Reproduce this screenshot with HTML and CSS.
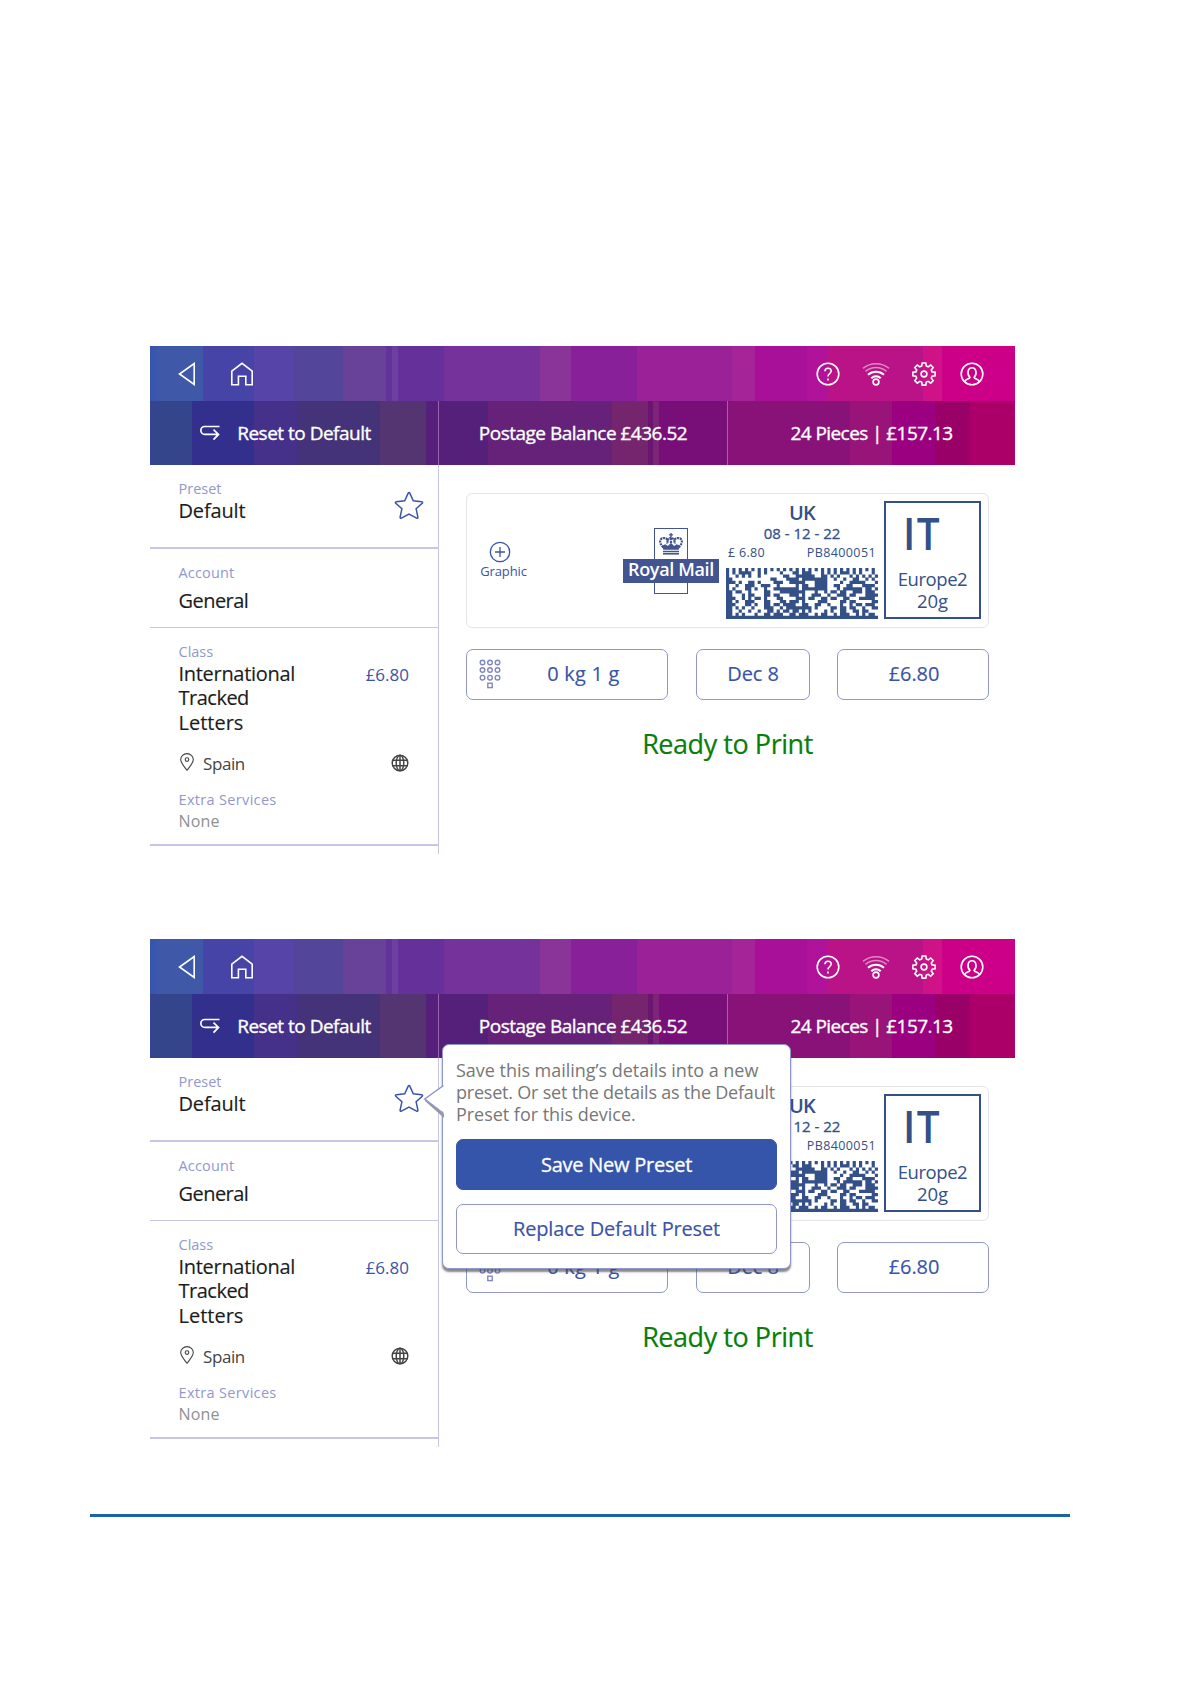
FILE: index.html
```
<!DOCTYPE html>
<html lang="en">
<head>
<meta charset="utf-8">
<title>Presets</title>
<link rel="stylesheet" href="styles.css">
</head>
<body>
<svg class="defs" width="0" height="0" aria-hidden="true">
  <symbol id="i-back" viewBox="0 0 18 24"><path d="M16.2 1.5v21L1.5 12z"/></symbol>
  <symbol id="i-home" viewBox="0 0 24 24"><path d="M1.8 9.2 12 1.3l10.2 7.9v13.5h-6.4v-8.4H8.4v8.4H1.8z"/></symbol>
  <symbol id="i-reset" viewBox="0 0 20 17"><path d="M19.5 1.5H4.8a3.9 3.9 0 0 0 0 7.9h13.6M13.5 4.6l5 4.8-5 5.2"/></symbol>
  <symbol id="i-help" viewBox="0 0 24 24"><circle cx="12" cy="12" r="10.8"/><path d="M9 9.3c0-4 6.200-3.900 6.200-.3 0 2.500-3.200 2.600-3.200 5.600M12 16.600v1.800"/></symbol>
  <symbol id="i-wifi" viewBox="0 0 28 24"><circle cx="14" cy="20" r="2.900"/><path stroke-width="2" d="M9.300 16.200a6.600 6.600 0 0 1 9.400 0M6 12.800a12 12 0 0 1 16 0"/><path opacity=".5" d="M3.500 9.300a16.500 16.500 0 0 1 21 0M1 6.300a21 21 0 0 1 26 0"/></symbol>
  <symbol id="i-gear" viewBox="0 0 24 24"><circle cx="12" cy="12" r="2.900"/><path d="M10.200 1h3.600l.5 3 1.900.8L18.700 3l2.500 2.500-1.900 2.500.8 1.900 3 .4v3.500l-3 .5-.8 1.900 1.900 2.400-2.500 2.500-2.500-1.800-1.900.8-.5 3h-3.600l-.5-3-1.900-.8-2.500 1.800-2.500-2.500 1.900-2.400-.8-1.900-3-.5v-3.500l3-.4.8-1.900-1.900-2.500L5.300 3l2.500 1.800 1.900-.8z"/></symbol>
  <symbol id="i-user" viewBox="0 0 24 24"><circle cx="12" cy="12" r="10.800"/><path d="M4.600 19.700c.8-2.900 4.600-2.300 5.300-4.300-3.200-3.300-2.300-9.600 2.100-9.600s5.300 6.300 2.100 9.600c.7 2 4.500 1.400 5.300 4.300"/></symbol>
  <symbol id="i-star" viewBox="0 0 30 30"><path d="M14.200 2.200q.8-1.400 1.600 0l3.500 7.600 8.400.9q1.500.3.500 1.500l-6.100 5.600 1.800 8.300q.1 1.600-1.300 1L15 23l-7.600 4.100q-1.400.6-1.300-1l1.800-8.300-6.100-5.600q-1-1.200.5-1.500l8.400-.9z"/></symbol>
  <symbol id="i-pin" viewBox="0 0 14 18"><path d="M7 17.300C3.500 12.500.7 9.900.7 6.500a6.300 5.900 0 0 1 12.600 0c0 3.400-2.800 6-6.300 10.800z"/><circle cx="7" cy="6.600" r="1.800"/></symbol>
  <symbol id="i-globe" viewBox="0 0 18 18"><circle cx="9" cy="9" r="7.800"/><ellipse cx="9" cy="9" rx="3.800" ry="7.800"/><path d="M9 1v16M1.600 6.200h14.800M1.600 11.800h14.800"/></symbol>
  <symbol id="i-plus" viewBox="0 0 22 22"><circle cx="11" cy="11" r="9.700"/><path d="M11 6v10M6 11h10"/></symbol>
  <symbol id="i-keys" viewBox="0 0 22 30"><circle cx="3.500" cy="3.500" r="2.300"/><circle cx="11" cy="3.500" r="2.300"/><circle cx="18.500" cy="3.500" r="2.300"/><circle cx="3.500" cy="11" r="2.300"/><circle cx="11" cy="11" r="2.300"/><circle cx="18.500" cy="11" r="2.300"/><circle cx="3.500" cy="18.700" r="2.300"/><circle cx="11" cy="18.700" r="2.300"/><circle cx="18.500" cy="18.700" r="2.300"/><rect x="8.800" y="24.200" width="4.400" height="4.400"/></symbol>
  <symbol id="i-crown" viewBox="0 0 24 22">
    <path fill="currentColor" stroke="none" d="M11.300 0h1.400v1.200H14v1.300h-1.300v1.800h-1.400V2.500H10V1.200h1.300z"/>
    <path stroke-width="2.200" stroke-dasharray="2.200 .7" d="M4.500 14.500C-.5 10 .5 5 5 5c3.500 0 4 3 3 6M19.500 14.500C24.500 10 23.500 5 19 5c-3.500 0-4 3-3 6M8.500 7.500c1-2 2-2.700 3.500-2.700s2.500.7 3.500 2.700M12 5v7"/>
    <path fill="currentColor" stroke="none" d="M3.500 12.500l2.800-1.200 2.500 1.700 3.200-3 3.200 3 2.500-1.700 2.800 1.200-.8 4.300H4.300z"/>
    <path stroke-width="1.500" d="M4 18.500h16"/><path stroke-width="1.600" d="M4 20.800h16"/>
  </symbol>
  <symbol id="i-matrix" viewBox="0 0 48 16" preserveAspectRatio="none"><path id="matrix-path" fill="currentColor" stroke="none"/></symbol>
</svg>

<template id="screen">
  <header class="bar bar-top">
    <svg class="icon back"><use href="#i-back"/></svg>
    <svg class="icon home"><use href="#i-home"/></svg>
    <div class="tools">
      <svg class="icon i24"><use href="#i-help"/></svg>
      <svg class="icon wifi"><use href="#i-wifi"/></svg>
      <svg class="icon i24"><use href="#i-gear"/></svg>
      <svg class="icon i24"><use href="#i-user"/></svg>
    </div>
  </header>
  <nav class="bar bar-sub">
    <div class="tab tab-reset"><svg class="icon reset"><use href="#i-reset"/></svg><span>Reset to Default</span></div>
    <div class="tab"><span>Postage Balance £436.52</span></div>
    <div class="tab"><span class="t-pieces">24 Pieces | £157.13</span></div>
  </nav>
  <div class="body">
    <aside class="side">
      <section class="preset">
        <div><div class="label">Preset</div><div class="value">Default</div></div>
        <svg class="star"><use href="#i-star"/></svg>
      </section>
      <section class="account">
        <div class="label">Account</div><div class="value">General</div>
      </section>
      <section class="class">
        <div class="label">Class</div>
        <div class="row"><div class="value"><span class="t-intl">International</span><br><span class="t-tracked">Tracked</span><br>Letters</div><span class="price">£6.80</span></div>
        <div class="row country"><svg class="pin"><use href="#i-pin"/></svg><span>Spain</span><svg class="globe"><use href="#i-globe"/></svg></div>
        <div class="label extra">Extra Services</div>
        <div class="none">None</div>
      </section>
    </aside>
    <main class="main">
      <div class="envelope">
        <div class="graphic"><svg><use href="#i-plus"/></svg><span>Graphic</span></div>
        <div class="mail">
          <div class="mail-top"><svg><use href="#i-crown"/></svg></div>
          <div class="mail-name"><span>Royal Mail</span></div>
          <div class="mail-foot"></div>
        </div>
        <div class="indicia">
          <div class="uk">UK</div>
          <div class="date">08 - 12 - 22</div>
          <div class="codes"><span>£ 6.80</span><span class="serial">PB8400051</span></div>
          <svg class="matrix"><use href="#i-matrix"/></svg>
        </div>
        <div class="zone">
          <div class="it">IT</div>
          <div class="z1">Europe2</div>
          <div class="z2">20g</div>
        </div>
      </div>
      <div class="buttons">
        <div class="btn weight"><svg class="keys"><use href="#i-keys"/></svg><span>0 kg 1 g</span></div>
        <div class="btn day"><span>Dec 8</span></div>
        <div class="btn cost"><span>£6.80</span></div>
      </div>
      <div class="ready">Ready to Print</div>
    </main>
  </div>
</template>

<div class="page">
  <div class="screen"></div>
  <div class="screen">
    <div class="popup">
      <svg class="pointer" viewBox="0 0 22 34"><path class="shade" d="M1 15 20 30v4L1 17z"/><path class="fill" d="M20.500 1.500 1.500 15l19 14z"/><path class="edge" d="M19.500 1.500.8 15l18.700 14.500"/></svg>
      <p>Save this mailing’s details into a new<br><span class="tight">preset. Or set the details as the Default</span><br>Preset for this device.</p>
      <div class="action primary"><span>Save New Preset</span></div>
      <div class="action"><span>Replace Default Preset</span></div>
    </div>
  </div>
  <div class="rule"></div>
</div>
<script src="script.js"></script>
</body>
</html>
```
FILE: script.js
```
const tpl = document.getElementById('screen');
document.querySelectorAll('.screen').forEach(s => s.prepend(tpl.content.cloneNode(true)));

// Data matrix modules, one string per row
const rows = [
  '101010101010101010101010101010101010101010101010',
  '101011110010100001000110111000101010111010100010',
  '100101010010000000110011111100110101000101010101',
  '110000000000001100011110111111110010010011001010',
  '111010011010000111001111100011110000100111110001',
  '100100111001110010000010110011110011001100011110',
  '101000110100100111111110111111110001011111101101',
  '110110010000110001111111100010010110110011101110',
  '110001011000110110001110100111001001110110001111',
  '111001010110100011000011101100110110011000111110',
  '110100111000110001101110100001110000110110000011',
  '111000110100110110111100110011001000100101101110',
  '110101001000111001011111111010000110110110010011',
  '110010010010011010110110101000010100110011011000',
  '110101000100110111001101110010110010111001010110',
  '111111111111111111111111111111111111111111111111'
];
let d = '';
rows.forEach((r, y) => {
  for (const m of r.matchAll(/1+/g)) d += `M${m.index} ${y}h${m[0].length}v1.02h-${m[0].length}z`;
});
document.getElementById('matrix-path').setAttribute('d', d);
```
FILE: styles.css
```
* { box-sizing: border-box; }
body { margin: 0; background: #fff; font-family: "Open Sans", "Noto Sans", sans-serif; color: #1c1c1c; }
svg { display: block; flex: none; fill: none; stroke: currentColor; overflow: visible; }
.defs { position: absolute; }
span { white-space: nowrap; }

.page { width: 1191px; height: 1684px; padding: 346px 0 0 150px; }
.screen { position: relative; width: 865px; height: 508px; margin-bottom: 85px; }

.bar { color: #fff; display: flex; }
.bar-top {
  height: 55px; align-items: center; padding: 0 31px 0 28px;
  background: linear-gradient(90deg, #3455b0 0, #4058a8 10px 53px, #4744a8 53px 104px, #5644a8 104px 143px, #534599 143px 193px, #684298 193px 236px, #62349a 236px 242px, #6d3fa0 242px 248px, #66309a 248px 294px, #75329a 294px 390px, #8a3398 390px 421px, #88209a 421px 487px, #9b2198 487px 582px, #a52598 582px 605px, #a8109a 605px 657px, #b0139a 657px 677px, #ba1388 677px 773px, #cf1288 773px 792px, #cc0088 792px);
}
.bar-sub {
  height: 64px; font-size: 19px; letter-spacing: -.5px; -webkit-text-stroke: .35px #fff;
  background: linear-gradient(90deg, #34458c 0 42px, #332f8c 42px 104px, #45308a 104px 147px, #443378 147px 230px, #553472 230px 276px, #55207a 276px 338px, #652278 338px 462px, #75246e 462px 498px, #6a1670 498px 503px, #7c2478 503px 509px, #780e78 509px 577px, #881278 577px 700px, #991478 700px 742px, #9a0080 742px 785px, #990068 785px 820px, #aa0068 820px);
}
.icon { stroke-width: 1.6; }
.back { width: 18px; height: 24px; }
.home { width: 24px; height: 24px; margin-left: 34px; }
.tools { display: flex; margin-left: auto; gap: 24px; }
.i24 { width: 24px; height: 24px; }
.wifi { width: 28px; height: 24px; margin: 0 -2px; }
.tab { width: 289px; display: flex; align-items: center; justify-content: center; border-right: 1px solid #9a62b0; }
.tab-reset { padding-right: 17px; }
.tab:last-child { width: 287px; border: 0; }
.t-pieces { letter-spacing: -.57px; }
.reset { width: 20px; height: 17px; margin: 0 17px 0 0; stroke-width: 1.7; }

.body { display: flex; height: 389px; }
.side { width: 289px; border-right: 1px solid #c8c4e4; }
.side section { padding: 14px 29px 0 28.500px; border-bottom: 2px solid #c8c6e6; }
.preset { height: 84px; display: flex; justify-content: space-between; }
.side .preset { padding-right: 14px; }
.star { width: 30px; height: 30px; margin-top: 12px; color: #3953a8; stroke-width: 1.5; }
.label { font-size: 14.500px; line-height: 20px; color: #9298cc; }
.value { font-size: 20px; line-height: 24.400px; -webkit-text-stroke: .15px; }
.preset .value { letter-spacing: -.15px; }
.account { height: 79px; }
.side .account { border-bottom-width: 1px; }
.account .label { letter-spacing: .15px; }
.account .value { margin-top: 6px; letter-spacing: -.55px; }
.t-intl { letter-spacing: -.3px; }
.t-tracked { letter-spacing: -.5px; }
.class { height: 218px; }
.row { display: flex; }
.price { margin-left: auto; font-size: 17px; line-height: 26px; color: #3953a8; }
.country { margin-top: 19px; font-size: 17px; line-height: 20px; letter-spacing: -.4px; color: #444; }
.pin { width: 14px; height: 18px; margin: -1px 9px 0 1.500px; stroke-width: 1.100; }
.globe { width: 18px; height: 18px; margin: 0 .500px 0 auto; stroke-width: 1.500; }
.extra { margin-top: 16px; letter-spacing: .33px; }
.none { margin-top: 1px; font-size: 16px; line-height: 20px; letter-spacing: .2px; color: #909090; }

.main { flex: 1; padding: 28px 26px 0 27px; }
.envelope { display: flex; height: 135px; width: 523px; border: 1px solid #e6e6ea; border-radius: 6px; color: #335088; }
.graphic { width: 50px; margin: 47px 0 0 8px; display: flex; flex-direction: column; align-items: center; font-size: 13px; line-height: 16px; letter-spacing: -.1px; color: #3953a8; }
.graphic span { margin-left: 7px; }
.graphic svg { width: 22px; height: 22px; stroke-width: 1.300; }
.mail { width: 96px; margin: 34px 0 0 98px; color: #435590; display: flex; flex-direction: column; align-items: center; }
.mail-top { width: 34px; height: 31px; border: 1px solid; border-bottom: 0; padding: 4px 4px 0; }
.mail-top svg { width: 24px; height: 22px; stroke-width: 1.5; }
.mail-name { width: 96px; height: 24px; background: #435590; display: flex; justify-content: center; font: 600 18px/21px "Open Sans", sans-serif; letter-spacing: -.35px; }
.mail-name span { color: #fff; }
.mail-foot { width: 34px; height: 11px; border: 1px solid; border-top: 0; }
.indicia { width: 152px; margin: 7px 0 0 7px; text-align: center; }
.uk { font-size: 20px; font-weight: 600; line-height: 24px; letter-spacing: -.8px; }
.date { font-size: 15px; line-height: 16px; -webkit-text-stroke: .3px; }
.codes { display: flex; justify-content: space-between; font-size: 12.500px; line-height: 16px; padding: 4px 2px 0 2px; }
.codes span:first-child { letter-spacing: .3px; }
.codes .serial { letter-spacing: .4px; }
.matrix { width: 152px; height: 51px; margin-top: 7px; }
.zone { width: 97px; height: 118px; margin: 7px 0 0 6px; border: 2px solid #335088; }
.it { font-size: 46px; line-height: 46px; font-weight: 600; letter-spacing: 1.500px; padding: 6px 0 0 17px; transform: scaleX(.88); transform-origin: 17px 0; }
.z1 { text-align: center; font-size: 18.500px; line-height: 22px; letter-spacing: -.45px; margin-top: 13px; }
.z2 { text-align: center; font-size: 18.500px; line-height: 22px; }

.buttons { display: flex; margin: 21px 0 0 -.500px; color: #3953a8; font-size: 20px; }
.btn { height: 50.500px; padding-bottom: 1.500px; border: 1.500px solid #8e96cc; border-radius: 7px; display: flex; align-items: center; justify-content: center; -webkit-text-stroke: .15px; }
.weight { width: 202px; position: relative; padding-left: 34px; letter-spacing: .2px; }
.keys { position: absolute; left: 12px; top: 9px; width: 22px; height: 30px; color: #8088c0; stroke-width: 1.400; }
.day { width: 114px; margin-left: 28.500px; letter-spacing: -.1px; }
.cost { width: 152px; margin-left: 27px; padding-left: 2px; letter-spacing: -.1px; }
.ready { margin-top: 26.500px; text-align: center; font-size: 27px; line-height: 36px; letter-spacing: -.45px; color: #0a7d0a; -webkit-text-stroke: .2px; }

.popup { position: absolute; left: 292px; top: 105px; width: 349px; height: 225px; padding: 13px 13px; background: #fff; border: 1.500px solid #8e96cc; border-radius: 7px; box-shadow: 0 3px 2px rgba(70,70,80,.65); color: #777; }
.pointer { position: absolute; left: -19px; top: 39px; width: 22px; height: 34px; stroke: none; }
.pointer .fill { fill: #fff; }
.pointer .shade { fill: #999; }
.pointer .edge { stroke: #8e96cc; stroke-width: 1.500; }
.popup p { margin: 1px 0 14px; font-size: 18px; line-height: 22px; white-space: nowrap; letter-spacing: -.03px; }
.popup .tight { letter-spacing: -.21px; }
.action { height: 50px; padding-bottom: 1px; border: 1.500px solid #8e96cc; border-radius: 7px; display: flex; align-items: center; justify-content: center; color: #3953a8; font-size: 20px; letter-spacing: -.16px; -webkit-text-stroke: .15px; }
.primary { height: 51px; background: #3455aa; border-color: #3455aa; color: #fff; margin-bottom: 14px; letter-spacing: -.25px; -webkit-text-stroke: .3px; }

.rule { width: 980px; height: 3px; margin: -18px 0 0 -60px; background: #1a63a5; }
```
